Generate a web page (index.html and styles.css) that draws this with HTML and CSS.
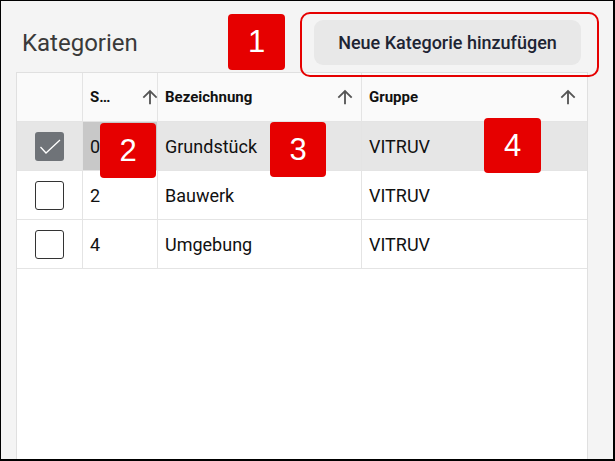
FILE: index.html
```html
<!DOCTYPE html>
<html lang="de">
<head>
    <meta charset="UTF-8">
    <meta name="viewport" content="width=device-width, initial-scale=1.0">
    <title>Kategorien</title>
    <link rel="stylesheet" href="styles.css">
</head>
<body>

    <div class="page">
        <div class="toolbar">
            <h1 class="title">Kategorien</h1>
            <button class="add-button">Neue Kategorie hinzufügen</button>
        </div>

        <div class="grid">
            <div class="row head">
                <div class="cell"></div>
                <div class="cell sort narrow"><span class="label">S…</span><svg class="arrow" viewBox="0 0 24 24"><path d="M4 12l1.41 1.41L11 7.83V20h2V7.83l5.58 5.59L20 12l-8-8-8 8z"/></svg></div>
                <div class="cell sort"><span class="label">Bezeichnung</span><svg class="arrow" viewBox="0 0 24 24"><path d="M4 12l1.41 1.41L11 7.83V20h2V7.83l5.58 5.59L20 12l-8-8-8 8z"/></svg></div>
                <div class="cell sort last"><span class="label">Gruppe</span><svg class="arrow" viewBox="0 0 24 24"><path d="M4 12l1.41 1.41L11 7.83V20h2V7.83l5.58 5.59L20 12l-8-8-8 8z"/></svg></div>
            </div>
            <div class="row selected">
                <div class="cell check"><span class="box checked"><svg viewBox="0 0 29 29"><path d="M5.5 15l5.5 6L25 8" /></svg></span></div>
                <div class="cell active">0</div>
                <div class="cell">Grundstück</div>
                <div class="cell">VITRUV</div>
            </div>
            <div class="row">
                <div class="cell check"><span class="box"></span></div>
                <div class="cell">2</div>
                <div class="cell">Bauwerk</div>
                <div class="cell">VITRUV</div>
            </div>
            <div class="row">
                <div class="cell check"><span class="box"></span></div>
                <div class="cell">4</div>
                <div class="cell">Umgebung</div>
                <div class="cell">VITRUV</div>
            </div>
        </div>

        <!-- Markierungen -->
        <div class="frame"></div>
        <span class="badge b1">1</span>
        <span class="badge b2">2</span>
        <span class="badge b3">3</span>
        <span class="badge b4">4</span>
    </div>

</body>
</html>
```

FILE: styles.css
```css
* { box-sizing: border-box; }
body { margin: 0; font-family: Roboto, "Noto Sans", sans-serif; color: #111; background: #fff; }
.page { position: relative; width: 615px; height: 461px; border-style: solid; border-color: #000; border-width: 1px 2px 2px 1px; background-color: #f4f4f4; padding: 0 25px 0 15px; display: flex; flex-direction: column; overflow: hidden; }

.toolbar { height: 71px; padding-top: 10px; display: flex; align-items: center; justify-content: space-between; }
.title { margin: 2px 0 0 6px; font-size: 24px; font-weight: 400; color: #3a3a3a; }
.add-button { margin-right: 7px; margin-top: 1px; width: 267px; height: 45px; border: none; border-radius: 9px; background-color: #e8e8e8; color: #1e2433; font-family: Roboto, sans-serif; font-size: 18px; font-weight: 500; cursor: pointer; }

.grid { flex: 1; background-color: #fff; border: 1px solid #e0e0e0; border-bottom: none; }
.row { display: grid; grid-template-columns: 65px 75px 204px 1fr; height: 49px; border-bottom: 1px solid #e4e4e4; font-size: 18px; }
.row.head { background-color: #fafafa; font-size: 15px; font-weight: 700; }
.row.selected { background-color: #e6e6e6; }
.cell { display: flex; align-items: center; padding-left: 7px; border-left: 1px solid #e4e4e4; white-space: nowrap; overflow: hidden; }
.cell:first-child { border-left: none; padding-left: 0; }
.cell.active { background-color: #c8c8c8; }
.sort { padding-right: 5px; }
.sort .label { flex: 1; overflow: hidden; }
.sort.narrow { padding-right: 0; }
.sort.narrow .arrow { margin-right: -4px; }
.sort.last { padding-right: 8px; }
.arrow { width: 22px; height: 22px; fill: #555; flex-shrink: 0; }

.check { justify-content: center; }
.box { width: 29px; height: 29px; border: 1px solid #333; border-radius: 3px; background: #fff; }
.box.checked { border: none; background-color: #6f7378; }
.box svg { display: block; width: 29px; height: 29px; fill: none; stroke: #fff; stroke-width: 1.3; }

.frame { position: absolute; left: 299px; top: 11px; width: 299px; height: 65px; border: 2px solid #e60000; border-radius: 10px; }
.badge { position: absolute; width: 56px; height: 55px; border-radius: 4px; background-color: #e60000; color: #fff; font-family: "Liberation Sans", Arial, sans-serif; font-size: 31px; display: flex; align-items: center; justify-content: center; }
.b1 { left: 227px; top: 13px; height: 56px; width: 57px; }
.b2 { left: 99px; top: 122px; }
.b3 { left: 269px; top: 121px; }
.b4 { left: 483px; top: 117px; width: 57px; }
```
